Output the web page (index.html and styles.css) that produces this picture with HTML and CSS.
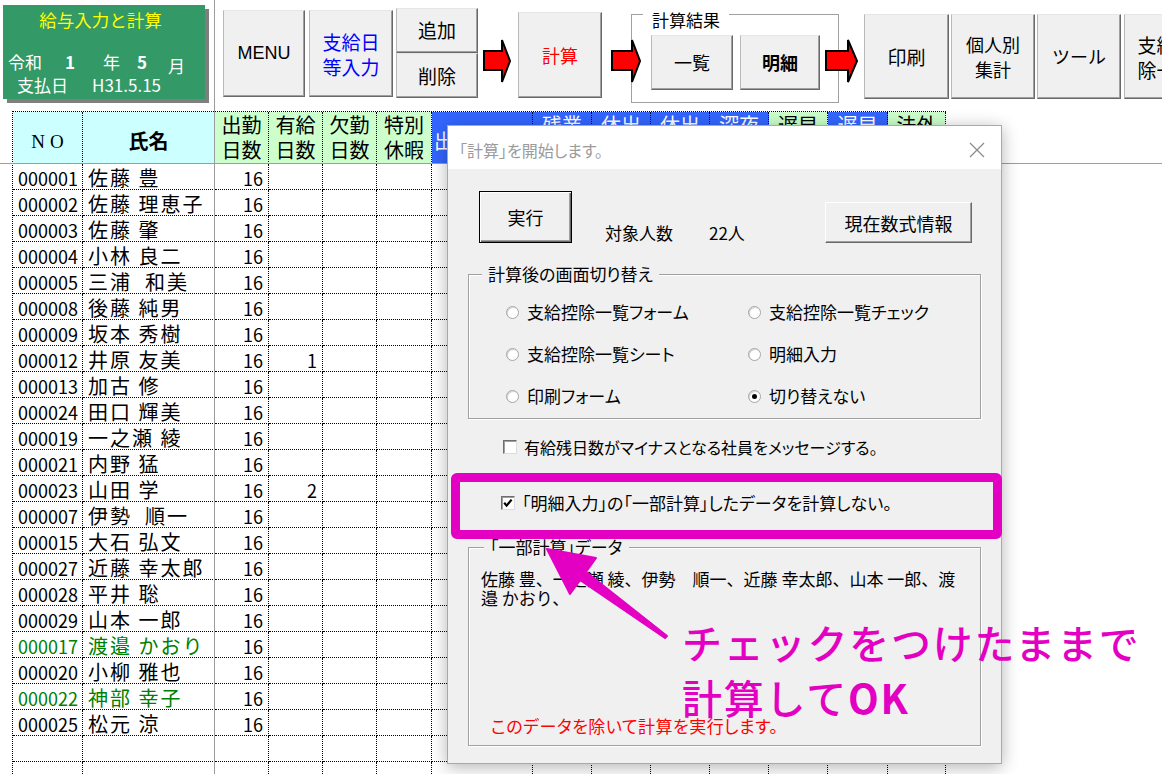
FILE: index.html
```html
<!DOCTYPE html>
<html lang="ja">
<head>
<meta charset="utf-8">
<title>給与入力と計算</title>
<link rel="stylesheet" href="styles.css">
</head>
<body>
<div class="screen">
  <header class="toolbar">
    <div class="titlebox">
      <div class="tb-title">給与入力と計算</div>
      <div class="tb-era"><span class="era-a">令和</span><span class="era-b">1</span><span class="era-c">年</span><span class="era-d">5</span><span class="era-e">月</span></div>
      <div class="tb-pay"><span class="pay-a">支払日</span><span class="pay-b">H31.5.15</span></div>
    </div>
    <div class="btn b-menu">MENU</div>
    <div class="btn b-date"><span>支給日</span><span>等入力</span></div>
    <div class="stack">
      <div class="btn b-add">追加</div>
      <div class="btn b-del">削除</div>
    </div>
    <svg class="arrow a1" width="28" height="46" viewBox="0 0 28 46"><polygon points="1,13 19,13 19,2 27,23 19,44 19,32 1,32"/></svg>
    <div class="btn b-calc">計算</div>
    <svg class="arrow a2" width="30" height="46" viewBox="0 0 30 46"><polygon points="1,13 21,13 21,2 29,23 21,44 21,32 1,32"/></svg>
    <div class="group">
      <span class="group-label">計算結果</span>
      <div class="btn b-list">一覧</div>
      <div class="btn b-detail">明細</div>
    </div>
    <svg class="arrow a3" width="33" height="46" viewBox="0 0 33 46"><polygon points="1,13 23,13 23,2 32,23 23,44 23,32 1,32"/></svg>
    <div class="btn b-print">印刷</div>
    <div class="btn b-person"><span>個人別</span><span>集計</span></div>
    <div class="btn b-tool">ツール</div>
    <div class="btn b-sum"><span>支給控</span><span>除一覧</span></div>
  </header>

  <div class="sheet">
    <span class="h h1 h-cyan h-no">NO</span><span class="h h1 h-cyan h-name">氏名</span><span class="h h-green">出勤<br>日数</span><span class="h h-green">有給<br>日数</span><span class="h h-green">欠勤<br>日数</span><span class="h h-green">特別<br>休暇</span><span class="h h1 h-blue h-left">出勤時間</span><span class="h h-blue">残業<br>時間</span><span class="h h-blue">休出<br>日数</span><span class="h h-blue">休出<br>時間</span><span class="h h-blue">深夜<br>時間</span><span class="h h-green">遅早<br>回数</span><span class="h h-blue">遅早<br>時間</span><span class="h h-green">法外<br>時間</span>

    <span class="no">000001</span><span class="nm">佐藤 豊</span><span class="n">16</span><span></span><span></span><span></span><span></span><span></span><span></span><span></span><span></span><span></span><span></span><span></span>
    <span class="no">000002</span><span class="nm">佐藤 理恵子</span><span class="n">16</span><span></span><span></span><span></span><span></span><span></span><span></span><span></span><span></span><span></span><span></span><span></span>
    <span class="no">000003</span><span class="nm">佐藤 肇</span><span class="n">16</span><span></span><span></span><span></span><span></span><span></span><span></span><span></span><span></span><span></span><span></span><span></span>
    <span class="no">000004</span><span class="nm">小林 良二</span><span class="n">16</span><span></span><span></span><span></span><span></span><span></span><span></span><span></span><span></span><span></span><span></span><span></span>
    <span class="no">000005</span><span class="nm">三浦  和美</span><span class="n">16</span><span></span><span></span><span></span><span></span><span></span><span></span><span></span><span></span><span></span><span></span><span></span>
    <span class="no">000008</span><span class="nm">後藤 純男</span><span class="n">16</span><span></span><span></span><span></span><span></span><span></span><span></span><span></span><span></span><span></span><span></span><span></span>
    <span class="no">000009</span><span class="nm">坂本 秀樹</span><span class="n">16</span><span></span><span></span><span></span><span></span><span></span><span></span><span></span><span></span><span></span><span></span><span></span>
    <span class="no">000012</span><span class="nm">井原 友美</span><span class="n">16</span><span class="n">1</span><span></span><span></span><span></span><span></span><span></span><span></span><span></span><span></span><span></span><span></span>
    <span class="no">000013</span><span class="nm">加古 修</span><span class="n">16</span><span></span><span></span><span></span><span></span><span></span><span></span><span></span><span></span><span></span><span></span><span></span>
    <span class="no">000024</span><span class="nm">田口 輝美</span><span class="n">16</span><span></span><span></span><span></span><span></span><span></span><span></span><span></span><span></span><span></span><span></span><span></span>
    <span class="no">000019</span><span class="nm">一之瀬 綾</span><span class="n">16</span><span></span><span></span><span></span><span></span><span></span><span></span><span></span><span></span><span></span><span></span><span></span>
    <span class="no">000021</span><span class="nm">内野 猛</span><span class="n">16</span><span></span><span></span><span></span><span></span><span></span><span></span><span></span><span></span><span></span><span></span><span></span>
    <span class="no">000023</span><span class="nm">山田 学</span><span class="n">16</span><span class="n">2</span><span></span><span></span><span></span><span></span><span></span><span></span><span></span><span></span><span></span><span></span>
    <span class="no">000007</span><span class="nm">伊勢  順一</span><span class="n">16</span><span></span><span></span><span></span><span></span><span></span><span></span><span></span><span></span><span></span><span></span><span></span>
    <span class="no">000015</span><span class="nm">大石 弘文</span><span class="n">16</span><span></span><span></span><span></span><span></span><span></span><span></span><span></span><span></span><span></span><span></span><span></span>
    <span class="no">000027</span><span class="nm">近藤 幸太郎</span><span class="n">16</span><span></span><span></span><span></span><span></span><span></span><span></span><span></span><span></span><span></span><span></span><span></span>
    <span class="no">000028</span><span class="nm">平井 聡</span><span class="n">16</span><span></span><span></span><span></span><span></span><span></span><span></span><span></span><span></span><span></span><span></span><span></span>
    <span class="no">000029</span><span class="nm">山本 一郎</span><span class="n">16</span><span></span><span></span><span></span><span></span><span></span><span></span><span></span><span></span><span></span><span></span><span></span>
    <span class="no g">000017</span><span class="nm g">渡邉 かおり</span><span class="n">16</span><span></span><span></span><span></span><span></span><span></span><span></span><span></span><span></span><span></span><span></span><span></span>
    <span class="no">000020</span><span class="nm">小柳 雅也</span><span class="n">16</span><span></span><span></span><span></span><span></span><span></span><span></span><span></span><span></span><span></span><span></span><span></span>
    <span class="no g">000022</span><span class="nm g">神部 幸子</span><span class="n">16</span><span></span><span></span><span></span><span></span><span></span><span></span><span></span><span></span><span></span><span></span><span></span>
    <span class="no">000025</span><span class="nm">松元 涼</span><span class="n">16</span><span></span><span></span><span></span><span></span><span></span><span></span><span></span><span></span><span></span><span></span><span></span>
    <span></span><span></span><span></span><span></span><span></span><span></span><span></span><span></span><span></span><span></span><span></span><span></span><span></span><span></span>
    <span></span><span></span><span></span><span></span><span></span><span></span><span></span><span></span><span></span><span></span><span></span><span></span><span></span><span></span>
  </div>

  <div class="freeze-v"></div>
  <div class="freeze-h"></div>

  <div class="dialog">
    <div class="dlg-title">
      <span class="dlg-caption">「計算」を開始します。</span>
      <svg class="dlg-close" width="16" height="16" viewBox="0 0 16 16"><path d="M1 1 L15 15 M15 1 L1 15"/></svg>
    </div>
    <div class="dlg-body">
      <div class="dlg-top">
        <div class="wbtn wbtn-default">実行</div>
        <span class="count-label">対象人数</span>
        <span class="count-value">22人</span>
        <div class="wbtn wbtn-formula">現在数式情報</div>
      </div>
      <div class="frame frame-switch">
        <span class="legend">計算後の画面切り替え</span>
        <div class="radios">
          <div class="opt"><span class="radio"></span>支給控除一覧フォーム</div>
          <div class="opt"><span class="radio"></span>支給控除一覧チェック</div>
          <div class="opt"><span class="radio"></span>支給控除一覧シート</div>
          <div class="opt"><span class="radio"></span>明細入力</div>
          <div class="opt"><span class="radio"></span>印刷フォーム</div>
          <div class="opt"><span class="radio on"></span>切り替えない</div>
        </div>
      </div>
      <div class="check check-minus"><span class="cbox"></span>有給残日数がマイナスとなる社員をメッセージする。</div>
      <div class="check check-partial"><span class="cbox"><svg width="12" height="12" viewBox="0 0 12 12"><path d="M2.2 5.8 L4.6 8.6 L9.6 2.6"/></svg></span>「明細入力」の「一部計算」したデータを計算しない。</div>
      <div class="frame frame-partial">
        <span class="legend">「一部計算」データ</span>
        <div class="names">佐藤 豊、一之瀬 綾、伊勢　順一、近藤 幸太郎、山本 一郎、渡<br>邉 かおり、</div>
        <div class="warn">このデータを除いて計算を実行します。</div>
      </div>
    </div>
  </div>

  <div class="highlight"></div>
  <svg class="pointer" width="135" height="105" viewBox="0 0 135 105"><polygon points="7,9 56,18 46,32 127,96 125,98 40,40 30,54"/></svg>
  <div class="note">チェックをつけたままで<br>計算して<b>OK</b></div>
</div>
</body>
</html>
```

FILE: styles.css
```css
* { box-sizing: border-box; }
html, body { margin: 0; padding: 0; }
body {
  width: 1162px;
  height: 774px;
  overflow: hidden;
  background: #fff;
  color: #000;
  font-family: "Noto Sans CJK JP", "Noto Sans", sans-serif;
}
.screen { position: relative; width: 1162px; height: 774px; overflow: hidden; }

/* ---------- toolbar ---------- */
.toolbar { display: flex; align-items: flex-start; height: 111px; }
.toolbar > * { flex-shrink: 0; }

.titlebox {
  margin: 5px 0 0 3px;
  width: 202px;
  height: 94px;
  background: #339966;
  box-shadow: 4px 4px 0 #7f7f7f;
  color: #fff;
  font-size: 17px;
  line-height: 20px;
}
.tb-title { color: #ffff00; text-align: center; padding: 5px 7px 0 0; height: 47px; font-size: 17.5px; }
.tb-era { display: flex; padding-left: 5px; height: 20px; }
.era-a { width: 57px; }
.era-b { width: 38px; font-weight: 700; }
.era-c { width: 34px; }
.era-d { width: 31px; font-weight: 700; }
.era-e { padding-top: 4px; }
.tb-pay { display: flex; margin-top: 3px; padding-left: 14px; }
.pay-a { width: 75px; }

.btn {
  display: flex;
  flex-direction: column;
  align-items: center;
  justify-content: center;
  background: #f0f0f0;
  border: 1px solid;
  border-color: #e6e6e6 #696969 #696969 #b9b9b9;
  box-shadow: inset -1px -1px 0 #a0a0a0;
  font-size: 19px;
  line-height: 25px;
  white-space: nowrap;
  overflow: hidden;
}
.b-menu { margin: 10px 0 0 18px; width: 82px; height: 87px; font-family: "Liberation Sans", Arial, sans-serif; font-size: 18px; }
.b-date { margin: 10px 0 0 4px; width: 84px; height: 87px; color: #0000ff; }
.stack { margin: 8px 0 0 3px; width: 82px; display: flex; flex-direction: column; }
.b-add, .b-del { height: 45px; }
.b-add { padding-bottom: 3px; }
.arrow { position: relative; z-index: 2; margin-top: 38px; fill: #ff0000; stroke: #000; stroke-width: 2; }
.a1 { margin-left: 5px; }
.b-calc { margin: 12px 0 0 7px; width: 84px; height: 86px; color: #ff0000; font-size: 18px; }
.a2 { margin-left: 9px; }
.group {
  position: relative;
  margin: 14px 0 0 -10px;
  width: 208px;
  height: 89px;
  border: 1px solid #a0a0a0;
  display: flex;
  align-items: flex-start;
  gap: 7px;
  padding: 20px 0 0 19px;
}
.group-label { position: absolute; left: 11px; top: -5px; padding: 0 9px; background: #fff; font-size: 17px; line-height: 20px; }
.b-list { width: 82px; height: 55px; font-size: 18px; }
.b-detail { width: 80px; height: 55px; font-size: 18px; font-weight: 700; }
.a3 { margin-left: -14px; }
.b-print { margin: 14px 0 0 6px; width: 85px; height: 85px; }
.b-person { margin: 14px 0 0 2px; width: 84px; height: 85px; font-size: 18px; }
.b-tool { margin: 14px 0 0 2px; width: 84px; height: 85px; font-size: 18px; }
.b-sum { margin: 14px 0 0 3px; width: 84px; height: 85px; }

/* ---------- sheet ---------- */
.sheet {
  width: 934px;
  margin-left: 12px;
  display: grid;
  grid-template-columns: 70px 132px 54px 54px 54px 55px 101px 59px 59px 59px 59px 59px 60px 58px;
  grid-template-rows: 52px;
  grid-auto-rows: 26px;
  border-left: 1px dotted #000;
  border-top: 1px dotted #000;
}
.sheet > span {
  display: block;
  border-right: 1px dotted #000;
  border-bottom: 1px dotted #000;
  font-size: 18px;
  line-height: 24px;
  padding-top: 2px;
  white-space: pre;
  overflow: hidden;
}
.sheet > .no { padding-left: 5px; }
.sheet > .nm { padding-left: 5px; font-size: 20px; letter-spacing: 2px; }
.sheet > .n { text-align: right; padding-right: 5px; }
.sheet > .g { color: #008000; }
.sheet > .h { text-align: center; font-size: 20px; line-height: 25px; padding-top: 0; }
.sheet > .h1 { padding-top: 16px; }
.h-cyan { background: #ccffff; }
.h-green { background: #ccffcc; }
.sheet > .h-blue { background: #3366ff; color: #fff; }
.sheet > .h-left { text-align: left; padding-left: 2px; }
.sheet > .h-no { font-family: "Liberation Serif", serif; font-size: 19px; letter-spacing: 5px; padding-left: 5px; padding-top: 17px; }
.sheet > .h-name { font-weight: 700; }

.freeze-v { position: absolute; left: 214px; top: 0; width: 1px; height: 774px; background: #9d9d9d; z-index: 5; }
.freeze-h { position: absolute; left: 0; top: 163px; width: 1162px; height: 1px; background: #9d9d9d; z-index: 5; }

/* ---------- dialog ---------- */
.dialog {
  position: absolute;
  left: 447px;
  top: 125px;
  width: 555px;
  height: 639px;
  border: 1px solid #a9a9a9;
  background: #f0f0f0;
  box-shadow: 0 3px 16px rgba(0, 0, 0, 0.3);
  z-index: 10;
  font-size: 17px;
  line-height: 20px;
  font-feature-settings: "palt";
}
.dlg-title {
  height: 43px;
  background: #fff;
  display: flex;
  align-items: center;
  justify-content: space-between;
  padding: 5px 16px 0 11px;
}
.dlg-caption { font-size: 16px; color: #9b9b9b; }
.dlg-close { stroke: #8a8a8a; stroke-width: 1.2; fill: none; }

.dlg-top { display: flex; align-items: flex-end; height: 52px; margin-top: 22px; padding-left: 31px; }
.wbtn { display: flex; align-items: center; justify-content: center; background: #f0f0f0; font-size: 18px; }
.wbtn-default {
  width: 93px;
  height: 52px;
  border: 1px solid #000;
  box-shadow: inset 1px 1px 0 #fff, inset -1px -1px 0 #696969, inset -2px -2px 0 #a0a0a0;
}
.count-label { margin-left: 33px; width: 104px; }
.count-value { width: 116px; }
.wbtn-formula {
  width: 147px;
  height: 41px;
  border: 1px solid;
  border-color: #fff #696969 #696969 #fff;
  box-shadow: inset -1px -1px 0 #a0a0a0;
}

.frame {
  position: relative;
  margin-left: 20px;
  width: 513px;
  border: 1px solid #a0a0a0;
  box-shadow: inset 1px 1px 0 #fff, 1px 1px 0 #fff;
}
.legend { position: absolute; top: -11px; padding: 0 6px; background: #f0f0f0; line-height: 20px; white-space: nowrap; }
.frame-switch { margin-top: 31px; height: 145px; }
.frame-switch .legend { left: 13px; }
.radios {
  display: grid;
  grid-template-columns: 242px 1fr;
  grid-auto-rows: 42px;
  align-items: center;
  padding: 16px 0 0 37px;
}
.opt { display: flex; align-items: center; gap: 8px; white-space: nowrap; }
.radio {
  position: relative;
  width: 13px;
  height: 13px;
  border-radius: 50%;
  background: #fff;
  border: 1px solid #a5a5a5;
  box-shadow: inset 1px 1px 0 #d6d6d6;
}
.radio.on::after {
  content: "";
  position: absolute;
  left: 3px;
  top: 3px;
  width: 5px;
  height: 5px;
  border-radius: 50%;
  background: #000;
}

.check { display: flex; align-items: center; height: 20px; gap: 7px; white-space: nowrap; }
.check-minus { margin-top: 18px; padding-left: 55px; font-size: 16px; }
.check-partial { margin-top: 36px; padding-left: 53px; }
.cbox {
  display: flex;
  align-items: center;
  justify-content: center;
  width: 14px;
  height: 14px;
  background: #fff;
  border: 1px solid;
  border-color: #6e6e6e #dcdcdc #dcdcdc #6e6e6e;
  box-shadow: inset 1px 1px 0 #a0a0a0;
}
.cbox svg { fill: none; stroke: #000; stroke-width: 2.2; }

.frame-partial {
  margin-top: 34px;
  height: 199px;
  display: flex;
  flex-direction: column;
  justify-content: space-between;
  padding: 21px 12px 9px 12px;
}
.frame-partial .legend { left: 15px; }
.names { font-feature-settings: normal; line-height: 19px; white-space: nowrap; }
.warn { color: #ff0000; padding-left: 10px; letter-spacing: 0.5px; }

/* ---------- annotation ---------- */
.highlight {
  position: absolute;
  left: 451px;
  top: 473px;
  width: 551px;
  height: 66px;
  border: 9px solid #e300c2;
  border-radius: 6px;
  z-index: 20;
}
.pointer {
  position: absolute;
  left: 540px;
  top: 540px;
  z-index: 20;
  fill: #e300c2;
  stroke: #e300c2;
  stroke-width: 2;
  stroke-linejoin: round;
}
.note {
  position: absolute;
  left: 682px;
  top: 615px;
  z-index: 20;
  color: #e300c2;
  font-size: 40px;
  line-height: 55px;
  letter-spacing: 1.8px;
  font-weight: 500;
  white-space: nowrap;
}
.note b { font-weight: 700; }
```
